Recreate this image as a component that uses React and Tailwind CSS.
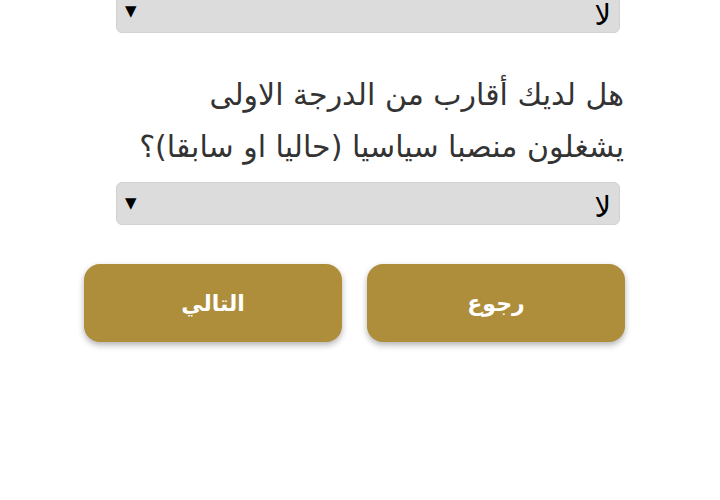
export default function App() {
  return (
    <div dir="rtl" className="w-[720px] h-[500px] bg-white overflow-hidden font-['DejaVu_Sans',sans-serif]">
      <div className="mr-[100px] ml-[116px] -mt-[10px] h-[43px] rounded-[6px] bg-[#dcdcdc] border border-[#d2d2d2] flex justify-between pr-[8px] pl-[8px]">
        <span className="text-[29px] leading-none text-black self-end pb-[2px]">لا</span>
        <span className="text-[15px] leading-none text-black mt-[13px]">▼</span>
      </div>
      <div className="mr-[96px] mt-[36px] text-[30px] leading-[52px] text-[#333] text-right">
        <div>هل لديك أقارب من الدرجة الاولى</div>
        <div>يشغلون منصبا سياسيا (حاليا او سابقا)؟</div>
      </div>
      <div className="mr-[100px] ml-[116px] mt-[9px] h-[43px] rounded-[6px] bg-[#dcdcdc] border border-[#d2d2d2] flex justify-between pr-[8px] pl-[8px]">
        <span className="text-[29px] leading-none text-black self-end pb-[2px]">لا</span>
        <span className="text-[15px] leading-none text-black mt-[13px]">▼</span>
      </div>
      <div className="mt-[39px] mr-[95px] ml-[84px] flex gap-[25px]">
        <button className="w-[258px] h-[78px] rounded-[16px] bg-[#ae8e3b] text-white text-[22px] font-bold shadow-[0_3px_6px_rgba(0,0,0,0.3)]">رجوع</button>
        <button className="w-[258px] h-[78px] rounded-[16px] bg-[#ae8e3b] text-white text-[22px] font-bold shadow-[0_3px_6px_rgba(0,0,0,0.3)]">التالي</button>
      </div>
    </div>
  );
}
